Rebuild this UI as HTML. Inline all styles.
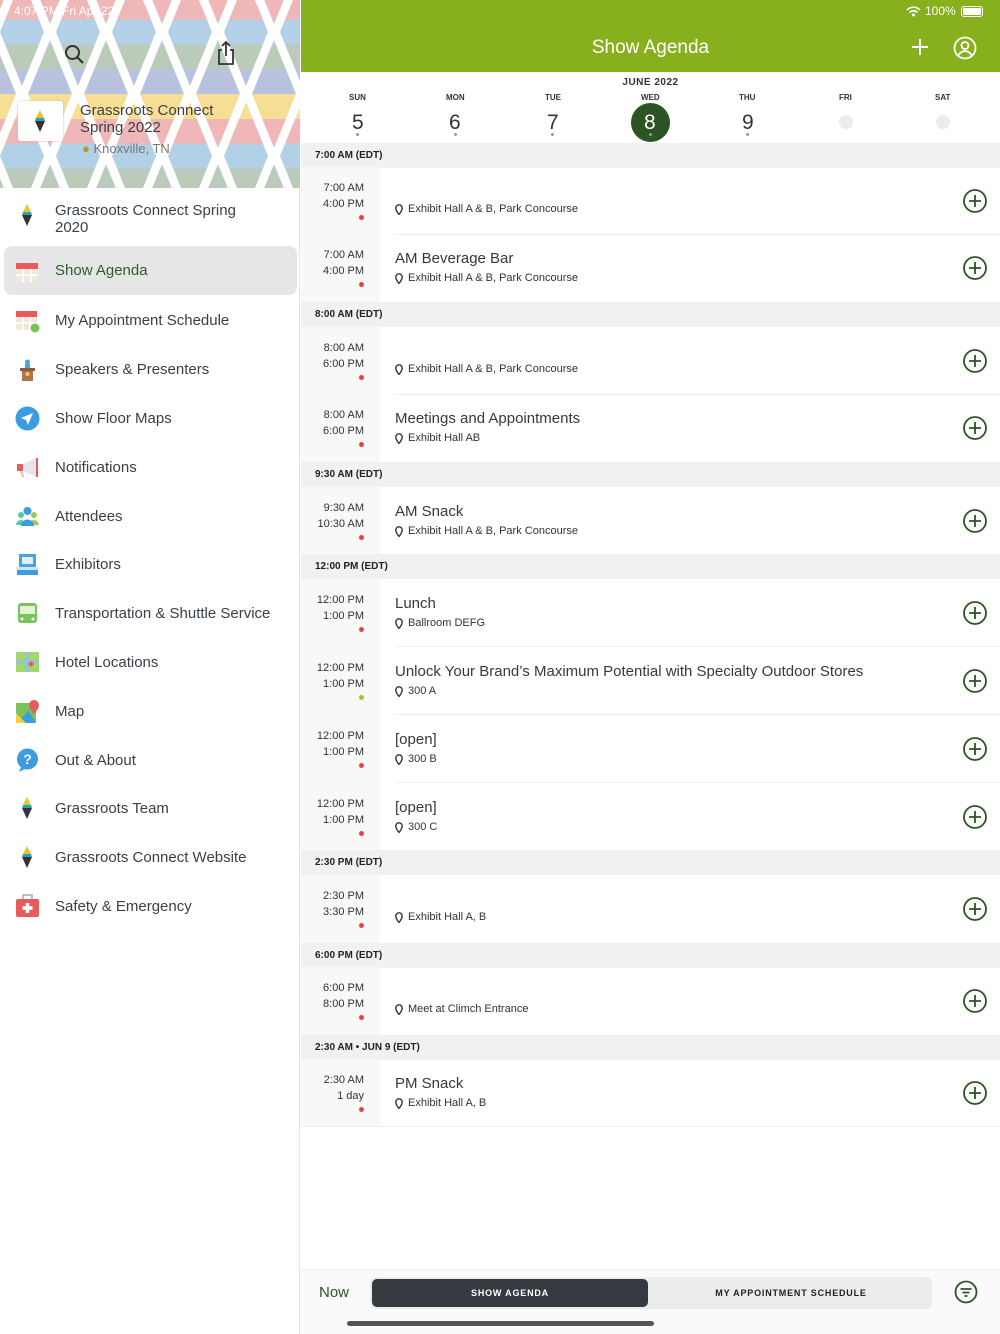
<!DOCTYPE html>
<html><head><meta charset="utf-8"><style>
*{margin:0;padding:0;box-sizing:border-box}
body{width:1000px;height:1334px;overflow:hidden;font-family:"Liberation Sans",sans-serif;background:#fff;position:relative;color:#333a40}
.abs{position:absolute}
#side{left:0;top:0;width:300px;height:1334px;border-right:1px solid #e4e4e4;background:#fff}
.mi{position:absolute;left:0;width:300px;height:40px;display:flex;align-items:center}
.mi .ic{position:absolute;left:15px;width:25px;height:25px}
.mi .t{position:absolute;left:55px;font-size:15px;color:#3a4047}
#main{left:301px;top:0;width:699px;height:1334px}
.hdr{position:absolute;left:0;width:699px;height:25px;background:#f1f1f1;font-size:10px;font-weight:bold;color:#222;padding:7px 0 0 14px}
.row{position:absolute;left:0;width:699px;height:68px}
.row .tc{position:absolute;left:0;top:0;width:79px;height:68px;background:#f8f8f8}
.row .t1,.row .t2{position:absolute;right:636px;font-size:11px;color:#333;text-align:right;white-space:nowrap}
.row .t1{top:15px}.row .t2{top:31px}
.row .dot{position:absolute;left:58px;top:48px;width:5px;height:5px;border-radius:50%;background:#e8413d}
.row .ti{position:absolute;left:94px;top:16px;font-size:15px;color:#333a40}
.row .lo{position:absolute;left:94px;top:38px;font-size:11px;color:#333;display:flex;align-items:center}
.row .lo svg{margin-right:5px}
.row .pl{position:absolute;left:662px;top:22px}
.row .ln{position:absolute;left:94px;right:0;bottom:0;height:1px;background:#eee}
</style></head><body>
<svg width="0" height="0" style="position:absolute"><defs>
<linearGradient id="st" gradientUnits="userSpaceOnUse" x1="0" y1="0" x2="0" y2="124" spreadMethod="repeat">
<stop offset="0" stop-color="#f4d77a"/><stop offset=".2" stop-color="#f4d77a"/>
<stop offset=".2" stop-color="#eba6a6"/><stop offset=".4" stop-color="#eba6a6"/>
<stop offset=".4" stop-color="#9fc6e0"/><stop offset=".6" stop-color="#9fc6e0"/>
<stop offset=".6" stop-color="#a9bfa8"/><stop offset=".8" stop-color="#a9bfa8"/>
<stop offset=".8" stop-color="#a4b3d6"/><stop offset="1" stop-color="#a4b3d6"/>
</linearGradient>
<pattern id="dm" width="56" height="124" patternUnits="userSpaceOnUse" x="-6" y="-30">
<rect width="56" height="124" fill="#fff"/>
<polygon points="28,8 50,62 28,116 6,62" fill="url(#st)"/>
<polygon points="0,-54 22,0 0,54 -22,0" fill="url(#st)"/>
<polygon points="56,-54 78,0 56,54 34,0" fill="url(#st)"/>
<polygon points="0,70 22,124 0,178 -22,124" fill="url(#st)"/>
<polygon points="56,70 78,124 56,178 34,124" fill="url(#st)"/>
</pattern></defs></svg>

<div id="side" class="abs">
<svg class="abs" style="left:0;top:0" width="300" height="188"><rect width="300" height="188" fill="url(#dm)"/><rect width="300" height="188" fill="#fff" opacity=".2"/></svg>
<div class="abs" style="left:14px;top:4px;font-size:12px;color:#fff">4:07 PM  Fri Apr 22</div>
<svg class="abs" style="left:64px;top:44px" width="22" height="22" viewBox="0 0 22 22"><circle cx="8.5" cy="8.5" r="6.5" fill="none" stroke="#333" stroke-width="2"/><line x1="13.5" y1="13.5" x2="19" y2="19" stroke="#333" stroke-width="2.2"/></svg>
<svg class="abs" style="left:216px;top:40px" width="20" height="26" viewBox="0 0 20 26"><path d="M6 10H3v14h14V10h-3M10 2v14M6 6l4-4 4 4" fill="none" stroke="#333" stroke-width="1.8"/></svg>
<div class="abs" style="left:18px;top:101px;width:45px;height:40px;background:#fff;border-radius:3px;box-shadow:0 0 2px #bbb"></div>
<svg class="abs" style="left:34px;top:110px" width="12" height="22" viewBox="0 0 12 22"><polygon points="6,0 10,8 2,8" fill="#e6c524"/><polygon points="2,8 10,8 11,11 1,11" fill="#2aa0c8"/><polygon points="1,11 11,11 6,22" fill="#333"/></svg>
<div class="abs" style="left:80px;top:102px;font-size:15px;line-height:17px;color:#3b3f44">Grassroots Connect<br>Spring 2022</div>
<div class="abs" style="left:82px;top:141px;font-size:13px;color:#777"><span style="color:#b79a25">&#9679;</span> Knoxville, TN</div>

<svg class="abs" style="left:21px;top:204px" width="12" height="22" viewBox="0 0 12 22"><polygon points="6,0 10,8 2,8" fill="#e6c524"/><polygon points="2,8 10,8 11,11 1,11" fill="#2aa0c8"/><polygon points="1,11 11,11 6,22" fill="#333"/></svg>
<div class="abs" style="left:55px;top:202px;font-size:15px;line-height:17px;color:#3a4047">Grassroots Connect Spring<br>2020</div>
<div class="abs" style="left:4px;top:246px;width:293px;height:49px;background:#e6e6e6;border-radius:8px"></div>
<svg class="abs" style="left:16px;top:260px" width="22" height="22" viewBox="0 0 22 22"><rect y="3" width="22" height="19" rx="2" fill="#efeadb"/><rect y="3" width="22" height="6" fill="#e65c5c"/><path d="M7 9v13M15 9v13M0 15h22" stroke="#fff" stroke-width="1.5"/></svg>
<div class="abs" style="left:55px;top:262px;font-size:15px;color:#2e5e2a">Show Agenda</div>

<div class="mi" style="top:300px"><svg class="ic" viewBox="0 0 25 25"><rect x="1" y="3" width="21" height="19" rx="2" fill="#efeadb"/><rect x="1" y="3" width="21" height="6" fill="#e65c5c"/><path d="M8 9v13M15 9v13M1 15h21" stroke="#fff" stroke-width="1.5"/><circle cx="20" cy="20" r="4.5" fill="#7ac35a"/></svg><span class="t">My Appointment Schedule</span></div>
<div class="mi" style="top:349px"><svg class="ic" viewBox="0 0 25 25"><circle cx="12.5" cy="5" r="2.5" fill="#4aa3df"/><rect x="10" y="7" width="5" height="5" fill="#4aa3df"/><rect x="5" y="11" width="15" height="3" fill="#8b5a3c"/><rect x="7" y="14" width="11" height="10" fill="#b07452"/><circle cx="12.5" cy="17" r="2" fill="#f3d23d"/></svg><span class="t">Speakers &amp; Presenters</span></div>
<div class="mi" style="top:398px"><svg class="ic" viewBox="0 0 25 25"><circle cx="12.5" cy="12.5" r="12" fill="#3b9de0"/><path d="M18 7L6 12l5 2 2 5z" fill="#fff"/></svg><span class="t">Show Floor Maps</span></div>
<div class="mi" style="top:447px"><svg class="ic" viewBox="0 0 25 25"><rect x="2" y="9" width="6" height="7" fill="#e65c5c"/><path d="M8 9l13-6v19L8 16z" fill="#e7e3ee"/><rect x="21" y="3" width="2" height="19" fill="#e65c5c"/><path d="M5 16l2 6h2l-1-6z" fill="#ccc"/></svg><span class="t">Notifications</span></div>
<div class="mi" style="top:496px"><svg class="ic" viewBox="0 0 25 25"><circle cx="6" cy="11" r="3" fill="#58c7a2"/><circle cx="19" cy="11" r="3" fill="#9bc95b"/><circle cx="12.5" cy="7" r="4" fill="#3b9de0"/><path d="M1 21a5 5 0 0 1 10 0z" fill="#58c7a2"/><path d="M14 21a5 5 0 0 1 10 0z" fill="#9bc95b"/><path d="M6 22a6.5 6.5 0 0 1 13 0z" fill="#3b9de0"/></svg><span class="t">Attendees</span></div>
<div class="mi" style="top:544px"><svg class="ic" viewBox="0 0 25 25"><rect x="4" y="2" width="17" height="13" fill="#4aa3df"/><rect x="7" y="5" width="11" height="7" fill="#dff0fb"/><rect x="1" y="15" width="23" height="3" fill="#cfe6f5"/><rect x="2" y="18" width="21" height="5" fill="#3b9de0"/></svg><span class="t">Exhibitors</span></div>
<div class="mi" style="top:593px"><svg class="ic" viewBox="0 0 25 25"><rect x="3" y="2" width="19" height="20" rx="3" fill="#7ac35a"/><rect x="5" y="5" width="15" height="8" fill="#e4f3da"/><circle cx="7" cy="18" r="1.5" fill="#fff"/><circle cx="18" cy="18" r="1.5" fill="#fff"/></svg><span class="t">Transportation &amp; Shuttle Service</span></div>
<div class="mi" style="top:642px"><svg class="ic" viewBox="0 0 25 25"><rect x="1" y="2" width="23" height="20" fill="#a6d56f"/><path d="M1 12h23M12 2v20" stroke="#8ec3e6" stroke-width="3"/><circle cx="16" cy="14" r="2.5" fill="#e65c5c"/></svg><span class="t">Hotel Locations</span></div>
<div class="mi" style="top:691px"><svg class="ic" viewBox="0 0 25 25"><rect x="1" y="4" width="20" height="20" fill="#7ac35a"/><path d="M1 24L14 12l7 12z" fill="#3b9de0"/><path d="M1 14l10 10H1z" fill="#f3d23d"/><path d="M19 1a5 5 0 0 1 5 5c0 4-5 9-5 9s-5-5-5-9a5 5 0 0 1 5-5z" fill="#e65c5c"/></svg><span class="t">Map</span></div>
<div class="mi" style="top:740px"><svg class="ic" viewBox="0 0 25 25"><circle cx="12.5" cy="11" r="10.5" fill="#3b9de0"/><path d="M6 19l-2 5 6-3z" fill="#3b9de0"/><text x="12.5" y="16" font-size="14" font-weight="bold" fill="#fff" text-anchor="middle" font-family="Liberation Sans">?</text></svg><span class="t">Out &amp; About</span></div>
<div class="mi" style="top:788px"><svg class="ic" viewBox="0 0 12 22" style="left:21px;width:12px;height:22px"><polygon points="6,0 10,8 2,8" fill="#e6c524"/><polygon points="2,8 10,8 11,11 1,11" fill="#2aa0c8"/><polygon points="1,11 11,11 6,22" fill="#333"/></svg><span class="t">Grassroots Team</span></div>
<div class="mi" style="top:837px"><svg class="ic" viewBox="0 0 12 22" style="left:21px;width:12px;height:22px"><polygon points="6,0 10,8 2,8" fill="#e6c524"/><polygon points="2,8 10,8 11,11 1,11" fill="#2aa0c8"/><polygon points="1,11 11,11 6,22" fill="#333"/></svg><span class="t">Grassroots Connect Website</span></div>
<div class="mi" style="top:886px"><svg class="ic" viewBox="0 0 25 25"><rect x="8" y="1" width="9" height="5" fill="none" stroke="#aaa" stroke-width="1.5"/><rect x="1" y="5" width="23" height="18" rx="2" fill="#e65c5c"/><path d="M12.5 9v10M7.5 14h10" stroke="#fff" stroke-width="3.5"/></svg><span class="t">Safety &amp; Emergency</span></div>
</div>

<div id="main" class="abs">
<div class="abs" style="left:0;top:0;width:699px;height:72px;background:#88b01d"></div>
<svg class="abs" style="left:605px;top:6px" width="15" height="11" viewBox="0 0 15 11"><path d="M1 4a9 9 0 0 1 13 0M3.5 6.5a5.5 5.5 0 0 1 8 0" fill="none" stroke="#fff" stroke-width="1.6"/><circle cx="7.5" cy="9" r="1.5" fill="#fff"/></svg>
<div class="abs" style="left:624px;top:4px;font-size:12px;color:#fff">100%</div>
<div class="abs" style="left:660px;top:6px;width:22px;height:11px;border:1px solid #fff;border-radius:3px;padding:1px"><div style="width:100%;height:100%;background:#fff;border-radius:1px"></div></div>
<div class="abs" style="left:0;top:37px;width:699px;text-align:center;font-size:19px;color:#fff">Show Agenda</div>
<svg class="abs" style="left:610px;top:38px" width="18" height="18" viewBox="0 0 18 18"><path d="M9 1v16M1 9h16" stroke="#fff" stroke-width="2"/></svg>
<svg class="abs" style="left:652px;top:36px" width="24" height="24" viewBox="0 0 24 24"><circle cx="12" cy="12" r="10.5" fill="none" stroke="#fff" stroke-width="1.8"/><circle cx="12" cy="9.5" r="3.5" fill="none" stroke="#fff" stroke-width="1.8"/><path d="M5.5 19.5a7 7 0 0 1 13 0" fill="none" stroke="#fff" stroke-width="1.8"/></svg>

<div class="abs" style="left:0;top:77px;width:699px;text-align:center;font-size:10px;font-weight:bold;color:#333;letter-spacing:.5px">JUNE 2022</div>
<div class="abs" style="top:0;left:0;width:699px;height:143px;font-size:8px;font-weight:bold;color:#333">
 <div class="abs" style="left:48px;top:93px">SUN</div><div class="abs" style="left:145px;top:93px">MON</div><div class="abs" style="left:244px;top:93px">TUE</div><div class="abs" style="left:340px;top:93px">WED</div><div class="abs" style="left:438px;top:93px">THU</div><div class="abs" style="left:538px;top:93px">FRI</div><div class="abs" style="left:634px;top:93px">SAT</div>
</div>
<div class="abs" style="left:330px;top:103px;width:39px;height:39px;border-radius:50%;background:#2c5424"></div>
<div class="abs" style="left:0;top:111px;width:699px;font-size:21px;color:#333">
 <span class="abs" style="left:51px">5</span><span class="abs" style="left:148px">6</span><span class="abs" style="left:246px">7</span><span class="abs" style="left:343px;color:#fff">8</span><span class="abs" style="left:441px">9</span>
</div>
<div class="abs" style="left:538px;top:115px;width:14px;height:14px;border-radius:50%;background:#ececec"></div>
<div class="abs" style="left:635px;top:115px;width:14px;height:14px;border-radius:50%;background:#ececec"></div>
<div class="abs" style="left:55px;top:133px;width:3px;height:3px;border-radius:50%;background:#999"></div>
<div class="abs" style="left:153px;top:133px;width:3px;height:3px;border-radius:50%;background:#999"></div>
<div class="abs" style="left:250px;top:133px;width:3px;height:3px;border-radius:50%;background:#999"></div>
<div class="abs" style="left:348px;top:133px;width:3px;height:3px;border-radius:50%;background:#999"></div>
<div class="abs" style="left:445px;top:133px;width:3px;height:3px;border-radius:50%;background:#999"></div>

<div class="hdr" style="top:143px">7:00 AM (EDT)</div>
<div class="row" style="top:167px"><div class="tc"></div><div class="t1">7:00 AM</div><div class="t2">4:00 PM</div><div class="dot"></div><div class="lo" style="top:36px"><svg width="8" height="11" viewBox="0 0 8 11"><path d="M4 0.8a3.2 3.2 0 0 1 3.2 3.2c0 2.5-3.2 6.5-3.2 6.5S0.8 6.5 0.8 4A3.2 3.2 0 0 1 4 0.8z" fill="none" stroke="#333" stroke-width="1.4"/></svg>Exhibit Hall A &amp; B, Park Concourse</div><svg class="pl" width="24" height="24" viewBox="0 0 24 24"><circle cx="12" cy="12" r="11" fill="none" stroke="#2c5424" stroke-width="1.8"/><path d="M12 6v12M6 12h12" stroke="#2c5424" stroke-width="1.8"/></svg><div class="ln"></div></div>
<div class="row" style="top:234px"><div class="tc"></div><div class="t1">7:00 AM</div><div class="t2">4:00 PM</div><div class="dot"></div><div class="ti">AM Beverage Bar</div><div class="lo"><svg width="8" height="11" viewBox="0 0 8 11"><path d="M4 0.8a3.2 3.2 0 0 1 3.2 3.2c0 2.5-3.2 6.5-3.2 6.5S0.8 6.5 0.8 4A3.2 3.2 0 0 1 4 0.8z" fill="none" stroke="#333" stroke-width="1.4"/></svg>Exhibit Hall A &amp; B, Park Concourse</div><svg class="pl" width="24" height="24" viewBox="0 0 24 24"><circle cx="12" cy="12" r="11" fill="none" stroke="#2c5424" stroke-width="1.8"/><path d="M12 6v12M6 12h12" stroke="#2c5424" stroke-width="1.8"/></svg></div>

<div class="hdr" style="top:302px">8:00 AM (EDT)</div>
<div class="row" style="top:327px"><div class="tc"></div><div class="t1">8:00 AM</div><div class="t2">6:00 PM</div><div class="dot"></div><div class="lo" style="top:36px"><svg width="8" height="11" viewBox="0 0 8 11"><path d="M4 0.8a3.2 3.2 0 0 1 3.2 3.2c0 2.5-3.2 6.5-3.2 6.5S0.8 6.5 0.8 4A3.2 3.2 0 0 1 4 0.8z" fill="none" stroke="#333" stroke-width="1.4"/></svg>Exhibit Hall A &amp; B, Park Concourse</div><svg class="pl" width="24" height="24" viewBox="0 0 24 24"><circle cx="12" cy="12" r="11" fill="none" stroke="#2c5424" stroke-width="1.8"/><path d="M12 6v12M6 12h12" stroke="#2c5424" stroke-width="1.8"/></svg><div class="ln"></div></div>
<div class="row" style="top:394px"><div class="tc"></div><div class="t1">8:00 AM</div><div class="t2">6:00 PM</div><div class="dot"></div><div class="ti">Meetings and Appointments</div><div class="lo"><svg width="8" height="11" viewBox="0 0 8 11"><path d="M4 0.8a3.2 3.2 0 0 1 3.2 3.2c0 2.5-3.2 6.5-3.2 6.5S0.8 6.5 0.8 4A3.2 3.2 0 0 1 4 0.8z" fill="none" stroke="#333" stroke-width="1.4"/></svg>Exhibit Hall AB</div><svg class="pl" width="24" height="24" viewBox="0 0 24 24"><circle cx="12" cy="12" r="11" fill="none" stroke="#2c5424" stroke-width="1.8"/><path d="M12 6v12M6 12h12" stroke="#2c5424" stroke-width="1.8"/></svg></div>

<div class="hdr" style="top:462px">9:30 AM (EDT)</div>
<div class="row" style="top:487px"><div class="tc"></div><div class="t1">9:30 AM</div><div class="t2">10:30 AM</div><div class="dot"></div><div class="ti">AM Snack</div><div class="lo"><svg width="8" height="11" viewBox="0 0 8 11"><path d="M4 0.8a3.2 3.2 0 0 1 3.2 3.2c0 2.5-3.2 6.5-3.2 6.5S0.8 6.5 0.8 4A3.2 3.2 0 0 1 4 0.8z" fill="none" stroke="#333" stroke-width="1.4"/></svg>Exhibit Hall A &amp; B, Park Concourse</div><svg class="pl" width="24" height="24" viewBox="0 0 24 24"><circle cx="12" cy="12" r="11" fill="none" stroke="#2c5424" stroke-width="1.8"/><path d="M12 6v12M6 12h12" stroke="#2c5424" stroke-width="1.8"/></svg></div>

<div class="hdr" style="top:554px">12:00 PM (EDT)</div>
<div class="row" style="top:579px"><div class="tc"></div><div class="t1">12:00 PM</div><div class="t2">1:00 PM</div><div class="dot"></div><div class="ti">Lunch</div><div class="lo"><svg width="8" height="11" viewBox="0 0 8 11"><path d="M4 0.8a3.2 3.2 0 0 1 3.2 3.2c0 2.5-3.2 6.5-3.2 6.5S0.8 6.5 0.8 4A3.2 3.2 0 0 1 4 0.8z" fill="none" stroke="#333" stroke-width="1.4"/></svg>Ballroom DEFG</div><svg class="pl" width="24" height="24" viewBox="0 0 24 24"><circle cx="12" cy="12" r="11" fill="none" stroke="#2c5424" stroke-width="1.8"/><path d="M12 6v12M6 12h12" stroke="#2c5424" stroke-width="1.8"/></svg><div class="ln"></div></div>
<div class="row" style="top:647px"><div class="tc"></div><div class="t1">12:00 PM</div><div class="t2">1:00 PM</div><div class="dot" style="background:#a9c22c"></div><div class="ti">Unlock Your Brand’s Maximum Potential with Specialty Outdoor Stores</div><div class="lo"><svg width="8" height="11" viewBox="0 0 8 11"><path d="M4 0.8a3.2 3.2 0 0 1 3.2 3.2c0 2.5-3.2 6.5-3.2 6.5S0.8 6.5 0.8 4A3.2 3.2 0 0 1 4 0.8z" fill="none" stroke="#333" stroke-width="1.4"/></svg>300 A</div><svg class="pl" width="24" height="24" viewBox="0 0 24 24"><circle cx="12" cy="12" r="11" fill="none" stroke="#2c5424" stroke-width="1.8"/><path d="M12 6v12M6 12h12" stroke="#2c5424" stroke-width="1.8"/></svg><div class="ln"></div></div>
<div class="row" style="top:715px"><div class="tc"></div><div class="t1">12:00 PM</div><div class="t2">1:00 PM</div><div class="dot"></div><div class="ti">[open]</div><div class="lo"><svg width="8" height="11" viewBox="0 0 8 11"><path d="M4 0.8a3.2 3.2 0 0 1 3.2 3.2c0 2.5-3.2 6.5-3.2 6.5S0.8 6.5 0.8 4A3.2 3.2 0 0 1 4 0.8z" fill="none" stroke="#333" stroke-width="1.4"/></svg>300 B</div><svg class="pl" width="24" height="24" viewBox="0 0 24 24"><circle cx="12" cy="12" r="11" fill="none" stroke="#2c5424" stroke-width="1.8"/><path d="M12 6v12M6 12h12" stroke="#2c5424" stroke-width="1.8"/></svg><div class="ln"></div></div>
<div class="row" style="top:783px"><div class="tc"></div><div class="t1">12:00 PM</div><div class="t2">1:00 PM</div><div class="dot"></div><div class="ti">[open]</div><div class="lo"><svg width="8" height="11" viewBox="0 0 8 11"><path d="M4 0.8a3.2 3.2 0 0 1 3.2 3.2c0 2.5-3.2 6.5-3.2 6.5S0.8 6.5 0.8 4A3.2 3.2 0 0 1 4 0.8z" fill="none" stroke="#333" stroke-width="1.4"/></svg>300 C</div><svg class="pl" width="24" height="24" viewBox="0 0 24 24"><circle cx="12" cy="12" r="11" fill="none" stroke="#2c5424" stroke-width="1.8"/><path d="M12 6v12M6 12h12" stroke="#2c5424" stroke-width="1.8"/></svg></div>

<div class="hdr" style="top:850px">2:30 PM (EDT)</div>
<div class="row" style="top:875px"><div class="tc"></div><div class="t1">2:30 PM</div><div class="t2">3:30 PM</div><div class="dot"></div><div class="lo" style="top:36px"><svg width="8" height="11" viewBox="0 0 8 11"><path d="M4 0.8a3.2 3.2 0 0 1 3.2 3.2c0 2.5-3.2 6.5-3.2 6.5S0.8 6.5 0.8 4A3.2 3.2 0 0 1 4 0.8z" fill="none" stroke="#333" stroke-width="1.4"/></svg>Exhibit Hall A, B</div><svg class="pl" width="24" height="24" viewBox="0 0 24 24"><circle cx="12" cy="12" r="11" fill="none" stroke="#2c5424" stroke-width="1.8"/><path d="M12 6v12M6 12h12" stroke="#2c5424" stroke-width="1.8"/></svg></div>

<div class="hdr" style="top:943px">6:00 PM (EDT)</div>
<div class="row" style="top:967px"><div class="tc"></div><div class="t1">6:00 PM</div><div class="t2">8:00 PM</div><div class="dot"></div><div class="lo" style="top:36px"><svg width="8" height="11" viewBox="0 0 8 11"><path d="M4 0.8a3.2 3.2 0 0 1 3.2 3.2c0 2.5-3.2 6.5-3.2 6.5S0.8 6.5 0.8 4A3.2 3.2 0 0 1 4 0.8z" fill="none" stroke="#333" stroke-width="1.4"/></svg>Meet at Climch Entrance</div><svg class="pl" width="24" height="24" viewBox="0 0 24 24"><circle cx="12" cy="12" r="11" fill="none" stroke="#2c5424" stroke-width="1.8"/><path d="M12 6v12M6 12h12" stroke="#2c5424" stroke-width="1.8"/></svg></div>

<div class="hdr" style="top:1035px">2:30 AM • JUN 9 (EDT)</div>
<div class="row" style="top:1059px"><div class="tc"></div><div class="t1">2:30 AM</div><div class="t2">1 day</div><div class="dot"></div><div class="ti">PM Snack</div><div class="lo"><svg width="8" height="11" viewBox="0 0 8 11"><path d="M4 0.8a3.2 3.2 0 0 1 3.2 3.2c0 2.5-3.2 6.5-3.2 6.5S0.8 6.5 0.8 4A3.2 3.2 0 0 1 4 0.8z" fill="none" stroke="#333" stroke-width="1.4"/></svg>Exhibit Hall A, B</div><svg class="pl" width="24" height="24" viewBox="0 0 24 24"><circle cx="12" cy="12" r="11" fill="none" stroke="#2c5424" stroke-width="1.8"/><path d="M12 6v12M6 12h12" stroke="#2c5424" stroke-width="1.8"/></svg><div class="ln" style="left:0"></div></div>

<div class="abs" style="left:0;top:1269px;width:699px;height:65px;background:#fafafa;border-top:1px solid #eee"></div>
<div class="abs" style="left:18px;top:1284px;font-size:15px;color:#2c5424">Now</div>
<div class="abs" style="left:69px;top:1277px;width:562px;height:32px;background:#ececec;border-radius:6px"></div>
<div class="abs" style="left:71px;top:1279px;width:276px;height:28px;background:#343a40;border-radius:5px;color:#fff;font-size:9px;font-weight:bold;letter-spacing:.8px;text-align:center;line-height:28px">SHOW AGENDA</div>
<div class="abs" style="left:350px;top:1279px;width:280px;height:28px;color:#222;font-size:9px;font-weight:bold;letter-spacing:.8px;text-align:center;line-height:28px">MY APPOINTMENT SCHEDULE</div>
<svg class="abs" style="left:653px;top:1280px" width="24" height="24" viewBox="0 0 24 24"><circle cx="12" cy="12" r="10.5" fill="none" stroke="#2c5424" stroke-width="1.8"/><path d="M6.5 9h11M8.5 12.5h7M10.5 16h3" stroke="#2c5424" stroke-width="1.8"/></svg>
<div class="abs" style="left:46px;top:1321px;width:307px;height:5px;border-radius:3px;background:#555"></div>
</div>
</body></html>
